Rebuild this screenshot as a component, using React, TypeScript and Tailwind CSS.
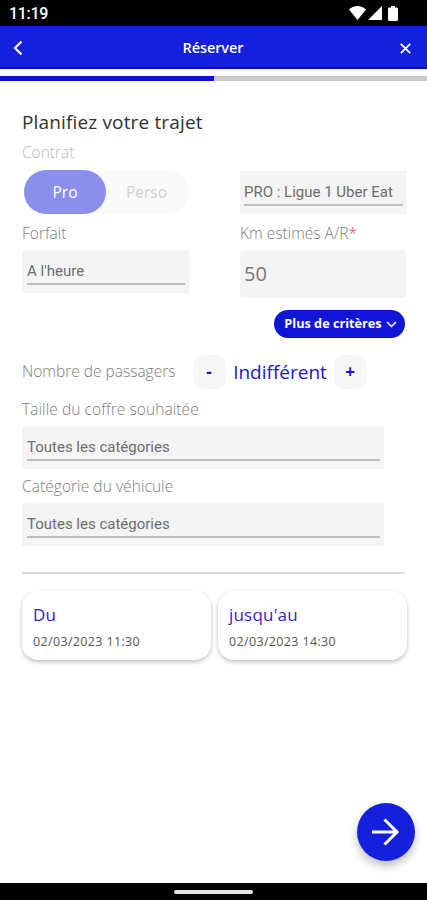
import type { ReactNode } from 'react';
import clsx from 'clsx';

function StatusBar() {
  return (
    <div className="flex h-[26px] items-center justify-between bg-black pr-[29px] pl-[9px] text-white">
      <span className="pt-[2px] font-['Roboto',sans-serif] text-[16px] leading-6 font-medium tracking-[-0.3px]">11:19</span>
      <div className="flex items-center">
        <svg width="17" height="14" viewBox="0 0 17 14" fill="currentColor">
          <path d="M8.5 14 0 3.4C2.4 1.3 5.3 0 8.5 0s6.1 1.3 8.5 3.4z" />
        </svg>
        <svg width="14" height="14" viewBox="0 0 14 14" fill="currentColor" className="ml-[2px]">
          <path d="M14 0v14H0z" />
        </svg>
        <svg width="10" height="15" viewBox="0 0 10 15" fill="currentColor" className="ml-[6px]">
          <path d="M3 0h4v1.5h1.5c.9 0 1.5.6 1.5 1.5v10.500c0 .9-.6 1.5-1.5 1.5h-7C.6 15 0 14.4 0 13.5V3c0-.9.6-1.5 1.5-1.5H3z" />
        </svg>
      </div>
    </div>
  );
}

function Header() {
  return (
    <header className="flex h-[43px] items-center justify-between border-b-2 border-[#0a0fc4] bg-[#1420dc] pr-[16px] pl-[13px] text-white">
      <button aria-label="Retour" className="w-[10px] pt-[2px]">
        <svg width="10" height="14" viewBox="0 0 10 14" fill="none" stroke="currentColor" strokeWidth="2.2">
          <path d="M8.5.5 2 7l6.500 6.500" />
        </svg>
      </button>
      <h1 className="pt-[3px] pl-[3px] text-[14.5px] leading-6 font-semibold tracking-[-0.1px]">Réserver</h1>
      <button aria-label="Fermer" className="w-[11px] pt-[3px]">
        <svg width="11" height="11" viewBox="0 0 11 11" fill="none" stroke="currentColor" strokeWidth="1.8">
          <path d="M.8.8 10.200 10.200M10.200.8.8 10.200" />
        </svg>
      </button>
    </header>
  );
}

function Label({ children, className }: { children: ReactNode; className?: string }) {
  return <div className={clsx('text-[15.5px] leading-6 font-light whitespace-nowrap', className)}>{children}</div>;
}

function Select({ value, className }: { value: string; className?: string }) {
  return (
    <div className={clsx('h-[43px] bg-[#f4f4f4] px-[4px] pt-[10px]', className)}>
      <div className="h-[25px] overflow-hidden border-b-2 border-[#bdbdbd] font-['Roboto',sans-serif] text-[15px] leading-[22px] whitespace-nowrap text-[#6c6c6c]">
        {value}
      </div>
    </div>
  );
}

function StepButton({ children }: { children: ReactNode }) {
  return (
    <button className="h-[34px] w-[33px] rounded-[11px] bg-[#f6f6f6] pr-[1px] text-[17px] leading-[34px] font-bold text-[#1a14c0]">
      {children}
    </button>
  );
}

function DateCard({ title, date }: { title: string; date: string }) {
  return (
    <div className="h-[69px] rounded-[16px] bg-white px-[11px] pt-[12px] shadow-[0_2px_4px_rgba(0,0,0,0.25)]">
      <div className="text-[17px] leading-6 tracking-[0.2px] text-[#3422c8]">{title}</div>
      <div className="mt-[5px] text-[12.5px] leading-5 tracking-[0.35px] text-[#555]">{date}</div>
    </div>
  );
}

export default function App() {
  return (
    <div className="flex h-[900px] w-[427px] flex-col overflow-hidden bg-white font-['Open_Sans',sans-serif]">
      <StatusBar />
      <Header />
      <div className="mt-[7px] h-[5px] shrink-0 bg-[#cbcbcd]">
        <div className="h-full w-[214px] bg-[#0c10cf]" />
      </div>

      <main className="flex flex-1 flex-col pr-[20px] pl-[22px]">
        <h2 className="mt-[27px] text-[19px] leading-7 tracking-[0.15px] text-[#303030]">Planifiez votre trajet</h2>
        <Label className="mt-[4px] text-[#b8b8b8]">Contrat</Label>

        <div className="mt-[7px] grid grid-cols-[167px_167px] gap-x-[51px]">
          <div className="mt-[-1px] ml-[2px] flex h-[44px] rounded-full bg-[#fafafa] text-[15.5px] leading-[44px]">
            <div className="w-[82px] rounded-full bg-[#8a8fee] text-center text-white">Pro</div>
            <div className="flex-1 pr-[2px] text-center text-[#cfcfcf]">Perso</div>
          </div>
          <Select value="PRO : Ligue 1 Uber Eat" />
          <Label className="mt-[7px] text-[#7c7c7c]">Forfait</Label>
          <Label className="mt-[7px] text-[#7c7c7c]">
            Km estimés A/R<span className="text-[#ff3b30]">*</span>
          </Label>
          <Select value="A l'heure" className="mt-[5px] pl-[5px]" />
          <div className="mt-[5px] h-[48px] rounded-[4px] bg-[#f4f4f4] px-[4px] text-[20px] leading-[47px] text-[#777]">
            50
          </div>
        </div>

        <button className="mt-[12px] mr-[2px] flex h-[28px] w-[131px] items-center justify-center gap-[4px] self-end rounded-full bg-[#1116d6] pl-[2px] text-[12.7px] font-bold whitespace-nowrap text-white">
          Plus de critères
          <svg width="11" height="7" viewBox="0 0 11 7" fill="none" stroke="currentColor" strokeWidth="1.5">
            <path d="m1 1 4.500 4.500L10 1" />
          </svg>
        </button>

        <div className="mt-[17px] flex h-[34px] items-center">
          <Label className="w-[171px] pb-[2px] text-[#7c7c7c]">Nombre de passagers</Label>
          <StepButton>-</StepButton>
          <span className="w-[108px] text-center text-[19px] text-[#1f16c4]">Indifférent</span>
          <StepButton>+</StepButton>
        </div>

        <Label className="mt-[8px] tracking-[0.08px] text-[#7c7c7c]">Taille du coffre souhaitée</Label>
        <Select value="Toutes les catégories" className="mt-[5px] w-[362px] pl-[5px]" />
        <Label className="mt-[5px] tracking-[0.06px] text-[#7c7c7c]">Catégorie du véhicule</Label>
        <Select value="Toutes les catégories" className="mt-[5px] w-[362px] pl-[5px]" />

        <hr className="mt-[26px] mr-[2px] border-t-2 border-[#dcdcdc]" />

        <div className="mt-[17px] grid grid-cols-[189px_189px] gap-[7px]">
          <DateCard title="Du" date="02/03/2023 11:30" />
          <DateCard title="jusqu'au" date="02/03/2023 14:30" />
        </div>

        <button
          aria-label="Suivant"
          className="mt-auto mr-[-8px] mb-[22px] flex h-[58px] w-[58px] items-center justify-center self-end rounded-full bg-[#1420dc] text-white shadow-[0_5px_8px_rgba(0,0,0,0.25)]"
        >
          <svg width="28" height="28" viewBox="0 0 28 28" fill="none" stroke="currentColor" strokeWidth="3">
            <path d="M0 14h26M12.500 1.500 25 14 12.500 26.500" />
          </svg>
        </button>
      </main>

      <div className="flex h-[17px] items-center justify-center bg-black pt-[1px]">
        <div className="h-[4px] w-[79px] rounded-full bg-[#e4e4e4]" />
      </div>
    </div>
  );
}
